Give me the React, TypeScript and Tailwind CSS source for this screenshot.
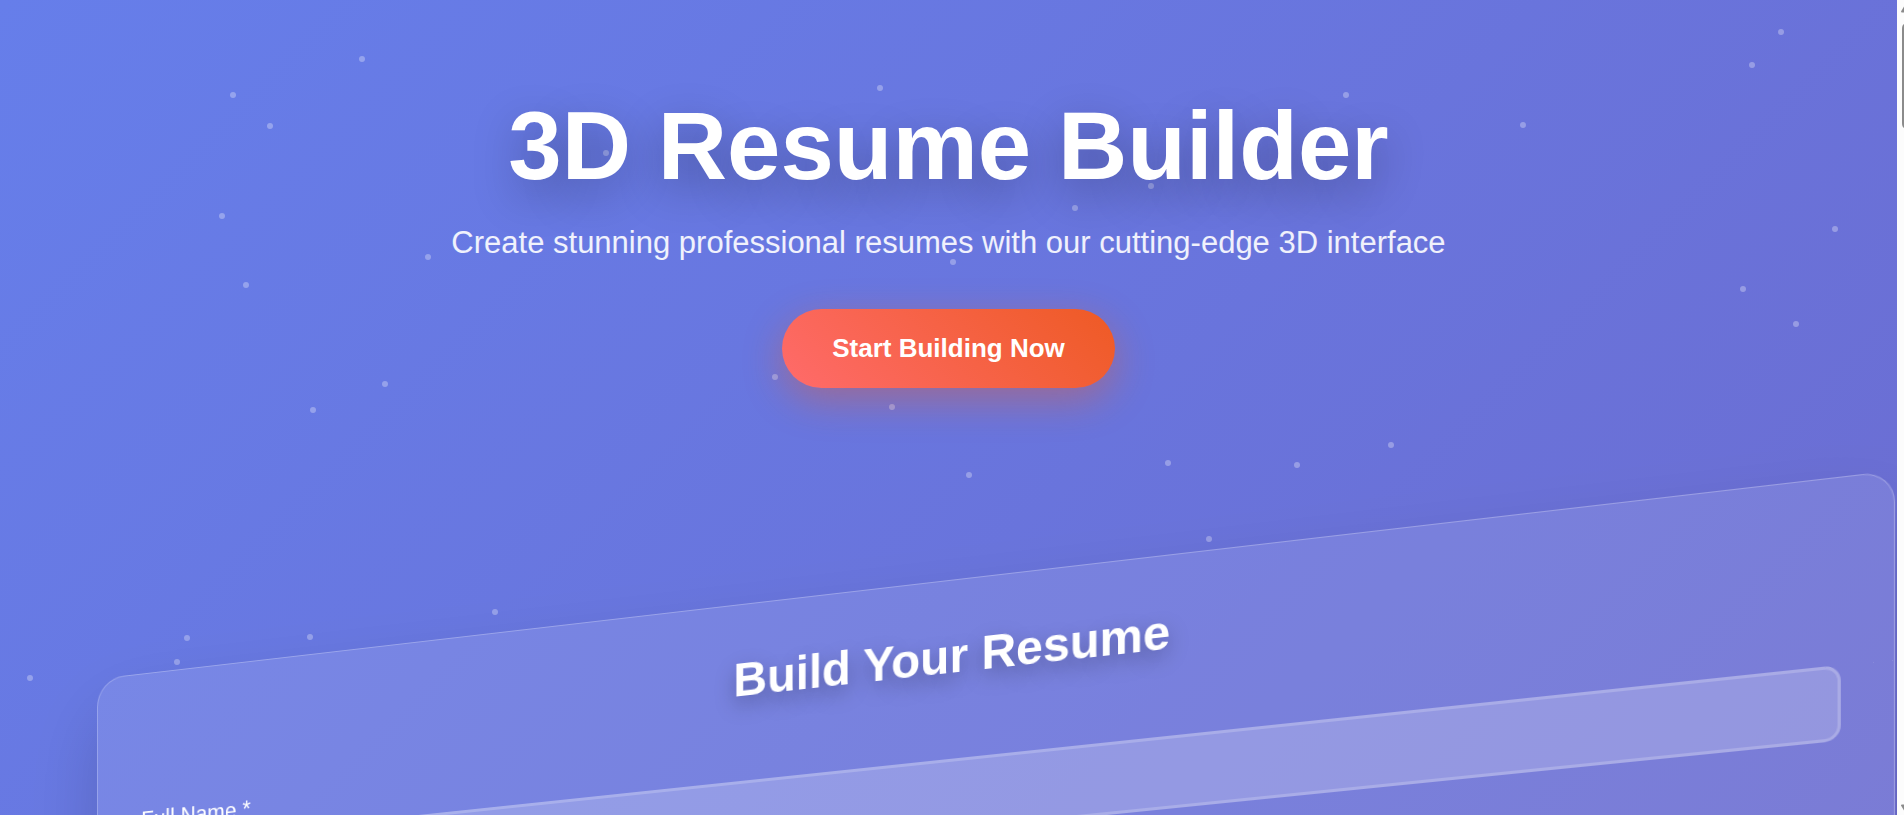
import React from "react";

const particles: [number, number][] = [
  [233, 95], [362, 59], [270, 126], [222, 216], [428, 257], [246, 285], [385, 384],
  [1781, 32], [1752, 65], [1835, 229], [1743, 289], [880, 88], [606, 153], [953, 262],
  [775, 377], [1346, 95], [1151, 186], [1075, 208], [187, 638], [310, 637], [177, 662],
  [892, 407], [1523, 125], [1796, 324], [313, 410], [969, 475], [1168, 463], [1297, 465],
  [1391, 445], [1209, 539], [495, 612], [30, 678],
];

function Particles() {
  return (
    <svg className="pointer-events-none absolute inset-0 h-full w-full" aria-hidden="true">
      {particles.map(([x, y]) => (
        <circle key={`${x}-${y}`} cx={x} cy={y} r="3" fill="#fff" fillOpacity="0.3" />
      ))}
    </svg>
  );
}

function Hero() {
  return (
    <header className="flex flex-col items-center pt-[91px] text-center">
      <h1 className="text-8xl leading-[110px] font-bold text-white [text-shadow:0_15px_45px_rgba(0,0,0,0.3)]">
        3D Resume Builder
      </h1>
      <p className="mt-6 text-[31px] leading-9 text-white/90">
        Create stunning professional resumes with our cutting-edge 3D interface
      </p>
      <button
        type="button"
        className="mt-12 rounded-full bg-[linear-gradient(45deg,#ff6b6b,#ee5a24)] px-[50px] py-6 text-[26px] leading-[31px] font-bold text-white shadow-[0_12px_38px_rgba(238,90,36,0.4)]"
      >
        Start Building Now
      </button>
    </header>
  );
}

function ResumeForm() {
  return (
    <section className="mx-auto mt-48 min-h-[1200px] w-full max-w-[1800px] origin-[50%_1988px] transform-[perspective(1500px)_rotateY(-5deg)] rounded-[30px] border border-white/25 bg-white/10 p-12 shadow-[0_38px_75px_rgba(0,0,0,0.15)]">
      <h2 className="text-center text-5xl leading-[55px] font-bold text-white [text-shadow:0_8px_22px_rgba(0,0,0,0.3)]">
        Build Your Resume
      </h2>
      <form className="mt-[38px] flex flex-col">
        <label htmlFor="full-name" className="text-[23px] leading-[25px] text-white">
          Full Name *
        </label>
        <input
          id="full-name"
          type="text"
          className="mt-3 h-[72px] w-full rounded-[15px] border-3 border-white/20 bg-white/20 px-6 text-2xl text-white outline-none"
        />
      </form>
    </section>
  );
}

function ScrollRail() {
  return (
    <div className="flex w-[7px] shrink-0 flex-col justify-between overflow-hidden bg-[#fcfcfc]" aria-hidden="true">
      <svg className="h-32 w-[7px]" viewBox="0 0 7 128">
        <path d="M4 11.5 L7 6.5 V12.5 H5 Q4 12.5 4 11.5Z" fill="#8b8b8b" />
        <path d="M7 24 Q5 25 5 29 V123 Q5 127 7 128Z" fill="#8b8b8b" />
      </svg>
      <svg className="h-4 w-[7px]" viewBox="0 0 7 16">
        <path d="M4 6.5 Q4 5.5 5 5.5 H7 V11.5Z" fill="#8b8b8b" />
      </svg>
    </div>
  );
}

export default function App() {
  return (
    <div className="flex h-screen overflow-hidden font-['Liberation_Sans',Arial,sans-serif]">
      <main className="relative min-w-0 flex-1 overflow-hidden bg-[linear-gradient(135deg,#667eea_0%,#764ba2_100%)] bg-[length:100%_6010px] bg-no-repeat">
        <Particles />
        <div className="relative">
          <Hero />
          <ResumeForm />
        </div>
      </main>
      <ScrollRail />
    </div>
  );
}
